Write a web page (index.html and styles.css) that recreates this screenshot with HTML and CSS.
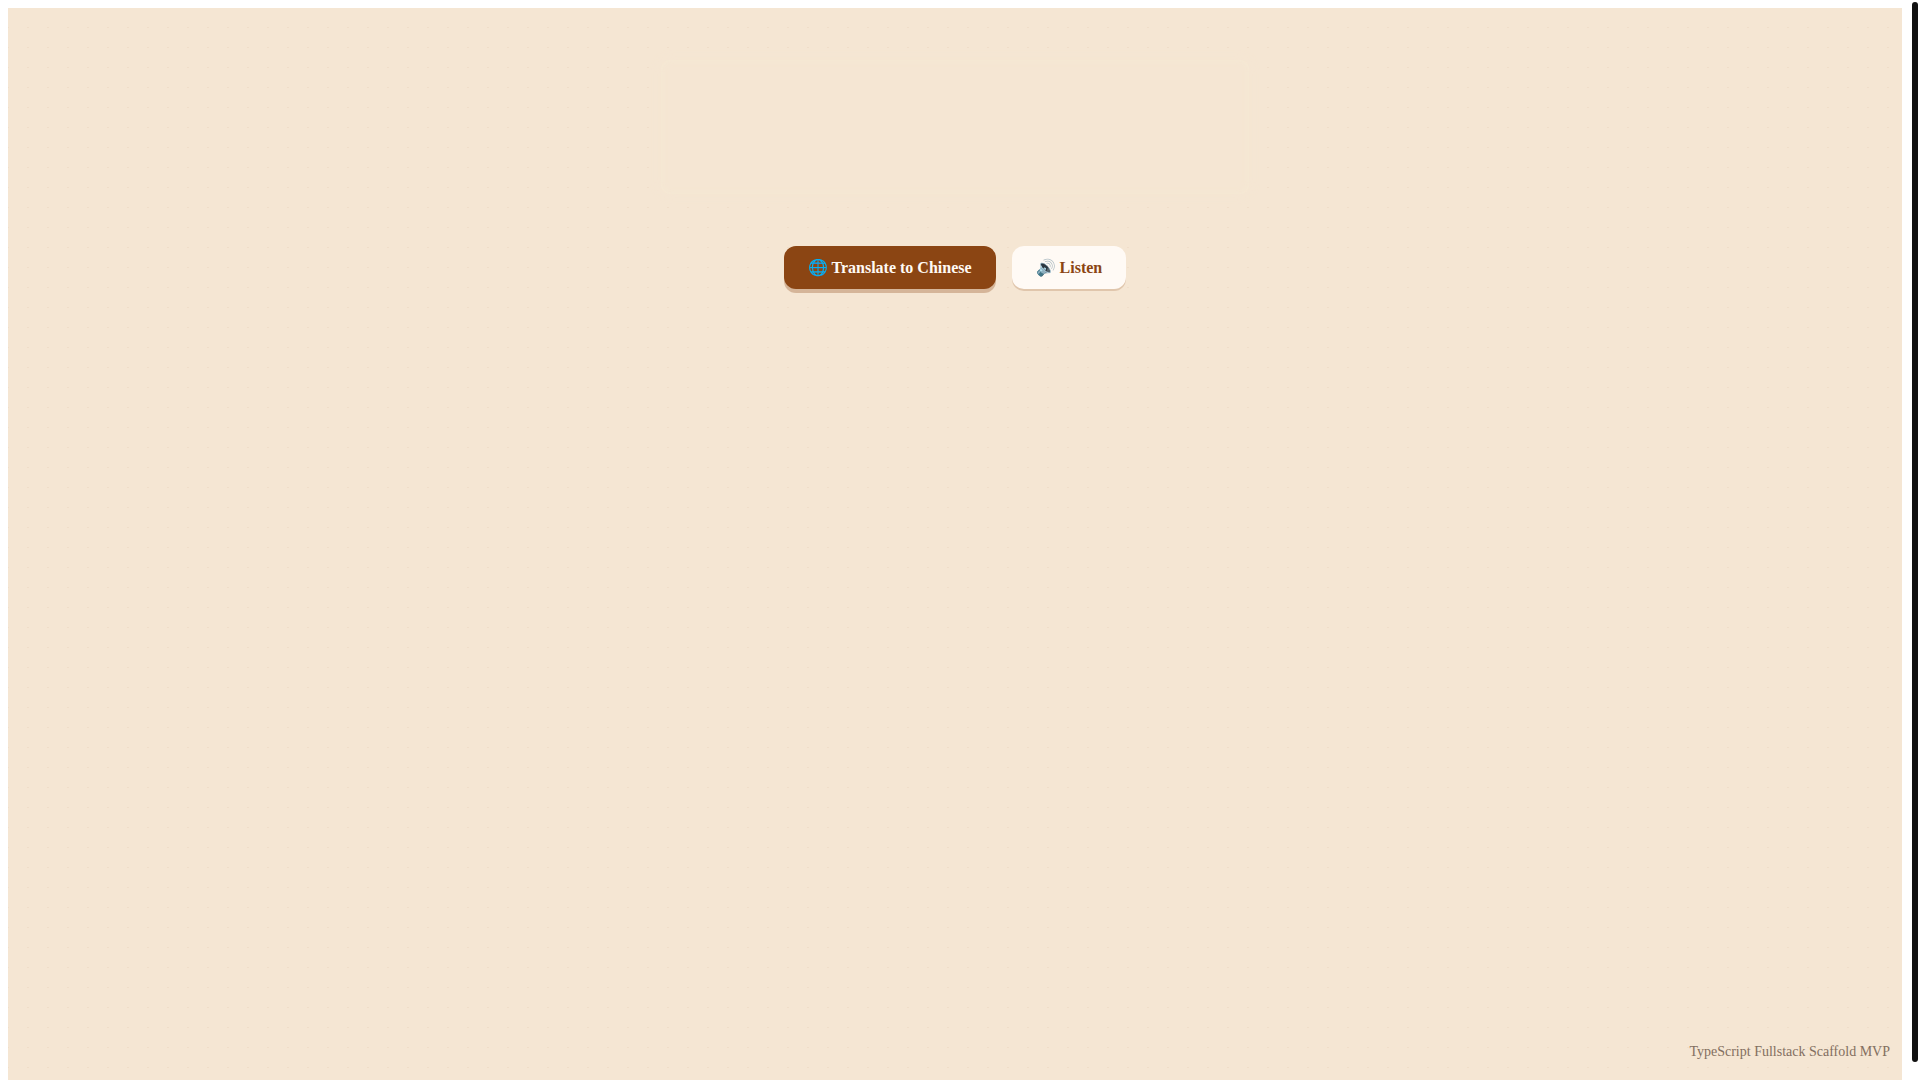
FILE: index.html
```html
<!DOCTYPE html>
<html lang="en">
<head>
    <meta charset="UTF-8">
    <meta name="viewport" content="width=device-width, initial-scale=1.0">
    <title>TypeScript Fullstack Scaffold MVP</title>
    <link rel="stylesheet" href="styles.css">
</head>
<body>
    <div class="page">
        <main class="content">
            <div class="message"></div>
            <div class="actions">
                <button type="button" class="btn btn-primary">🌐 Translate to Chinese</button>
                <button type="button" class="btn btn-secondary">🔊 Listen</button>
            </div>
        </main>
        <footer class="footer">TypeScript Fullstack Scaffold MVP</footer>
    </div>
    <div class="scrollbar"></div>
</body>
</html>
```

FILE: styles.css
```css
* {
    box-sizing: border-box;
}
body {
    margin: 0;
    padding: 8px 18px 0 8px;
    height: 100vh;
    overflow: hidden;
    background: #fff;
    font-family: "Liberation Serif", serif;
}
.page {
    display: flex;
    flex-direction: column;
    height: 100%;
    padding: 52px 12px 20px;
    background-color: #f5e6d3;
    background-image:
        linear-gradient(45deg, rgba(139, 69, 19, 0.05) 1px, transparent 1px),
        linear-gradient(-45deg, rgba(139, 69, 19, 0.05) 1px, transparent 1px);
    background-size: 20px 20px;
}
.content {
    flex: 1;
    display: flex;
    flex-direction: column;
    align-items: center;
    gap: 52px;
}
.message {
    width: 100%;
    max-width: 588px;
    height: 134px;
    border-radius: 8px;
    background-color: #f5e6d3;
    box-shadow: inset 0 0 8px rgba(255, 248, 220, 0.2), 0 0 12px #f5e6d3;
}
.actions {
    display: flex;
    gap: 16px;
}
.btn {
    padding: 12px 24px;
    border: none;
    border-radius: 12px;
    font-family: inherit;
    font-size: 16px;
    font-weight: bold;
    cursor: pointer;
}
.btn-primary {
    background: #8b4513;
    color: #fffaf5;
    box-shadow: 0 4px 0 rgba(139, 69, 19, 0.3);
}
.btn-secondary {
    background: #fffaf5;
    color: #8b4513;
    box-shadow: 0 2px 0 rgba(139, 69, 19, 0.2);
}
.footer {
    text-align: right;
    font-size: 14px;
    color: #836f60;
}
.scrollbar {
    position: absolute;
    top: 2px;
    right: 2px;
    bottom: 18px;
    width: 6px;
    border-radius: 3px;
    background: #111;
}
```
